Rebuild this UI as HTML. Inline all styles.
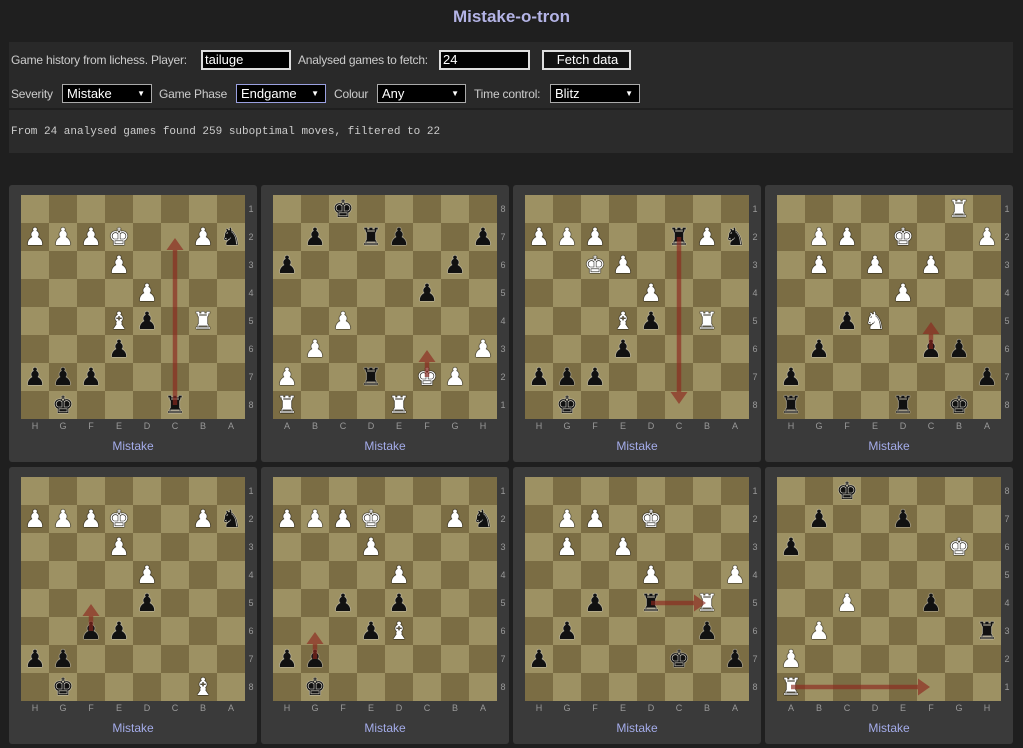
<!DOCTYPE html><html><head><meta charset="utf-8"><style>
body{margin:0;background:#1f1f1f;width:1023px;height:748px;overflow:hidden;font-family:"Liberation Sans",sans-serif;color:#ccc;font-size:12px;position:relative}
h1{position:absolute;top:7px;left:0;width:1023px;text-align:center;margin:0;font-size:17px;color:#b4b4e6;font-weight:bold}
.panel{position:absolute;left:9px;width:1004px;background:#292929}
.a{position:absolute;white-space:nowrap;letter-spacing:-0.2px}
.in{position:absolute;background:#000;border:2px solid #ddd;color:#fff;font-size:13px;box-sizing:border-box;padding-left:2px;line-height:16px}
.sel{position:absolute;background:#000;border:1px solid #aaa;color:#fff;font-size:13px;box-sizing:border-box;padding-left:4px;line-height:17px;height:19px}
.sel:after{content:"▼";position:absolute;right:6px;top:0;font-size:8px}
.card{position:absolute;width:248px;height:277px;background:#3a3a3a;border-radius:3px}
.board{position:absolute;left:12px;top:10px;width:224px;height:224px}
.sq{position:absolute;width:28px;height:28px}
.pc{position:absolute;width:28px;height:28px;text-align:center;line-height:28px;font-size:24px;font-family:"DejaVu Sans",sans-serif}
.w{color:#fff;text-shadow:0 0 1px #000,0 0 1px #000,0 0 1px #000}
.b{color:#111;text-shadow:0 0 1px #fff,0 0 1px #ddd}
.rk{position:absolute;left:238px;width:8px;font-size:9px;color:#999;text-align:center}
.fl{position:absolute;top:236px;width:28px;font-size:9px;color:#999;text-align:center}
.lab{position:absolute;top:254px;width:248px;text-align:center;color:#a4acea;font-size:12px}
</style></head><body>
<h1>Mistake-o-tron</h1>
<div class="panel" style="top:42px;height:66px"></div>
<div class="panel" style="top:110px;height:43px;background:#2b2b2b"></div>
<div class="a" style="left:11px;top:53px">Game history from lichess. Player:</div>
<div class="in" style="left:201px;top:50px;width:90px;height:20px">tailuge</div>
<div class="a" style="left:298px;top:53px">Analysed games to fetch:</div>
<div class="in" style="left:439px;top:50px;width:91px;height:20px">24</div>
<div class="in" style="left:542px;top:50px;width:89px;height:20px;text-align:center;background:#111">Fetch data</div>
<div class="a" style="left:11px;top:87px">Severity</div>
<div class="sel" style="left:62px;top:84px;width:90px">Mistake</div>
<div class="a" style="left:159px;top:87px">Game Phase</div>
<div class="sel" style="left:236px;top:84px;width:90px;border-color:#9aa0e0">Endgame</div>
<div class="a" style="left:334px;top:87px">Colour</div>
<div class="sel" style="left:377px;top:84px;width:89px">Any</div>
<div class="a" style="left:474px;top:87px">Time control:</div>
<div class="sel" style="left:550px;top:84px;width:90px">Blitz</div>
<div class="a" style="left:11px;top:126px;font-family:'Liberation Mono',monospace;font-size:11px;color:#ccc;letter-spacing:0">From 24 analysed games found 259 suboptimal moves, filtered to 22</div>
<div id="root"></div>
<script>
var G={K:'♚',Q:'♛',R:'♜',B:'♝',N:'♞',P:'♟'};
var boards=[
{f:1,p:"1,0,P 1,1,P 1,2,P 1,3,K 1,6,P 1,7,n 2,3,P 3,4,P 4,3,B 4,4,p 4,6,R 5,3,p 6,0,p 6,1,p 6,2,p 7,1,k 7,5,r",a:[7,5,1,5]},
{f:0,p:"0,2,k 1,1,p 1,3,r 1,4,p 1,7,p 2,0,p 2,6,p 3,5,p 4,2,P 5,1,P 5,7,P 6,0,P 6,3,r 6,5,K 6,6,P 7,0,R 7,4,R",a:[6,5,5,5]},
{f:1,p:"1,0,P 1,1,P 1,2,P 1,5,r 1,6,P 1,7,n 2,2,K 2,3,P 3,4,P 4,3,B 4,4,p 4,6,R 5,3,p 6,0,p 6,1,p 6,2,p 7,1,k",a:[1,5,7,5]},
{f:1,p:"0,6,R 1,1,P 1,2,P 1,4,K 1,7,P 2,1,P 2,3,P 2,5,P 3,4,P 4,2,p 4,3,N 5,1,p 5,5,p 5,6,p 6,0,p 6,7,p 7,0,r 7,4,r 7,6,k",a:[5,5,4,5]},
{f:1,p:"1,0,P 1,1,P 1,2,P 1,3,K 1,6,P 1,7,n 2,3,P 3,4,P 4,4,p 5,2,p 5,3,p 6,0,p 6,1,p 7,1,k 7,6,B",a:[5,2,4,2]},
{f:1,p:"1,0,P 1,1,P 1,2,P 1,3,K 1,6,P 1,7,n 2,3,P 3,4,P 4,2,p 4,4,p 5,3,p 5,4,B 6,0,p 6,1,p 7,1,k",a:[6,1,5,1]},
{f:1,p:"1,1,P 1,2,P 1,4,K 2,1,P 2,3,P 3,4,P 3,7,P 4,2,p 4,4,r 4,6,R 5,1,p 5,6,p 6,0,p 6,5,k 6,7,p",a:[4,4,4,6]},
{f:0,p:"0,2,k 1,1,p 1,4,p 2,0,p 2,6,K 4,2,P 4,5,p 5,1,P 5,7,r 6,0,P 7,0,R",a:[7,0,7,5]}
];
var h='';
boards.forEach(function(b,i){
 var x=9+(i%4)*252,y=185+Math.floor(i/4)*282;
 h+='<div class="card" style="left:'+x+'px;top:'+y+'px"><div class="board">';
 for(var r=0;r<8;r++)for(var c=0;c<8;c++)h+='<div class="sq" style="left:'+c*28+'px;top:'+r*28+'px;background:'+((r+c)%2?'#7b6d44':'#9d9163')+'"></div>';
 b.p.split(' ').forEach(function(s){var t=s.split(','),ch=t[2],w=ch==ch.toUpperCase();
  h+='<div class="pc '+(w?'w':'b')+'" style="left:'+t[1]*28+'px;top:'+t[0]*28+'px">'+G[ch.toUpperCase()]+'</div>';});
 var a=b.a,x1=a[1]*28+14,y1=a[0]*28+14,x2=a[3]*28+14,y2=a[2]*28+14,dx=x2-x1,dy=y2-y1,L=Math.sqrt(dx*dx+dy*dy),ux=dx/L,uy=dy/L;
 var hx=x2-ux*1,hy=y2-uy*1,bx=hx-ux*12,by=hy-uy*12;
 h+='<svg width="224" height="224" style="position:absolute;left:0;top:0"><g fill="rgba(140,40,30,0.65)"><line x1="'+x1+'" y1="'+y1+'" x2="'+bx+'" y2="'+by+'" stroke="rgba(140,40,30,0.65)" stroke-width="4.5"/><polygon points="'+hx+','+hy+' '+(bx-uy*8.5)+','+(by+ux*8.5)+' '+(bx+uy*8.5)+','+(by-ux*8.5)+'"/></g></svg>';
 h+='</div>';
 for(var r=0;r<8;r++)h+='<div class="rk" style="top:'+(10+r*28+9)+'px">'+(b.f?r+1:8-r)+'</div>';
 var F='ABCDEFGH';
 for(var c=0;c<8;c++)h+='<div class="fl" style="left:'+(12+c*28)+'px">'+(b.f?F[7-c]:F[c])+'</div>';
 h+='<div class="lab">Mistake</div></div>';
});
document.getElementById('root').innerHTML=h;
</script>
</body></html>
